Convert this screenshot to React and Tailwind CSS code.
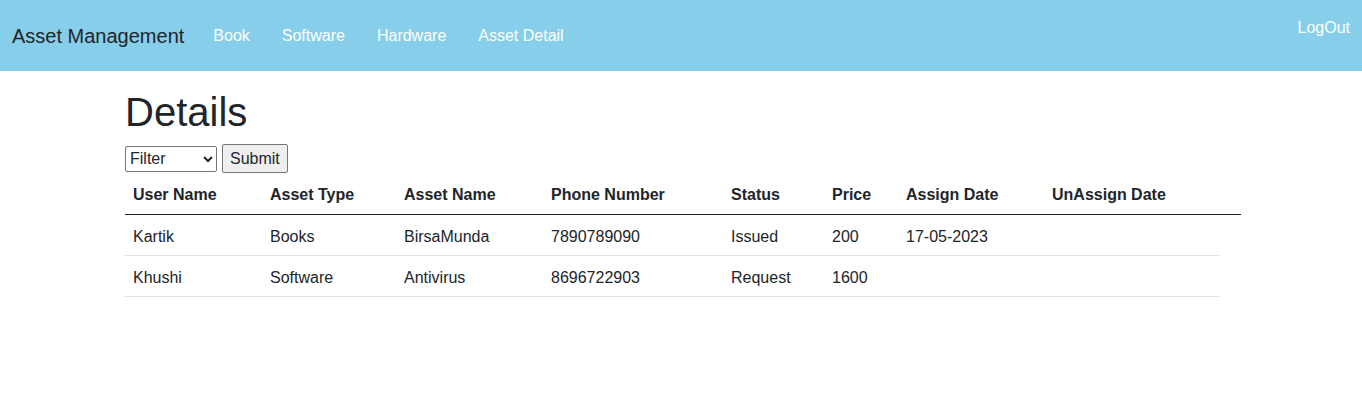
import React from "react";

const cols = [
  { h: "User Name", w: "w-[137px]" },
  { h: "Asset Type", w: "w-[134px]" },
  { h: "Asset Name", w: "w-[147px]" },
  { h: "Phone Number", w: "w-[180px]" },
  { h: "Status", w: "w-[101px]" },
  { h: "Price", w: "w-[74px]" },
  { h: "Assign Date", w: "w-[146px]" },
  { h: "UnAssign Date", w: "w-[175px]" },
];

const rows = [
  ["Kartik", "Books", "BirsaMunda", "7890789090", "Issued", "200", "17-05-2023", ""],
  ["Khushi", "Software", "Antivirus", "8696722903", "Request", "1600", "", ""],
];

export default function App() {
  return (
    <div className="min-h-[411px] bg-white font-['Liberation_Sans',Arial,sans-serif] text-[16px] leading-[1.5] text-[#212529]">
      <nav className="relative flex h-[71px] items-center bg-[#87ceeb] px-3">
        <span className="mr-[13px] text-[20px]">Asset Management</span>
        <a className="px-4 text-white">Book</a>
        <a className="px-4 text-white">Software</a>
        <a className="px-4 text-white">Hardware</a>
        <a className="px-4 text-white">Asset Detail</a>
        <a className="absolute right-3 top-[16px] text-white">LogOut</a>
      </nav>
      <div className="ml-[125px] w-[1116px] pt-[17px]">
        <h1 className="mb-2 text-[40px] font-medium leading-[1.2]">Details</h1>
        <div className="flex items-center gap-[5px]">
          <select className="h-[26px] w-[92px] rounded-[2px] border border-[#767676] bg-white text-[16px]">
            <option>Filter</option>
          </select>
          <button className="h-[29px] rounded-[2px] border border-[#767676] bg-[#efefef] px-[7px]">Submit</button>
        </div>
        <table className="mt-px w-full border-collapse text-left">
          <thead>
            <tr>
              {cols.map((c) => (
                <th key={c.h} className={`${c.w} border-b border-[#212529] px-2 pt-[9px] pb-[7px] font-bold`}>{c.h}</th>
              ))}
              <th className="border-b border-[#212529] px-2 pt-[9px] pb-[7px]"></th>
            </tr>
          </thead>
          <tbody>
            {rows.map((r, i) => (
              <tr key={i}>
                {r.map((v, j) => (
                  <td key={j} className="border-b border-[#dee2e6] px-2 pt-[10px] pb-[6px]">{v}</td>
                ))}
              </tr>
            ))}
          </tbody>
        </table>
      </div>
    </div>
  );
}
